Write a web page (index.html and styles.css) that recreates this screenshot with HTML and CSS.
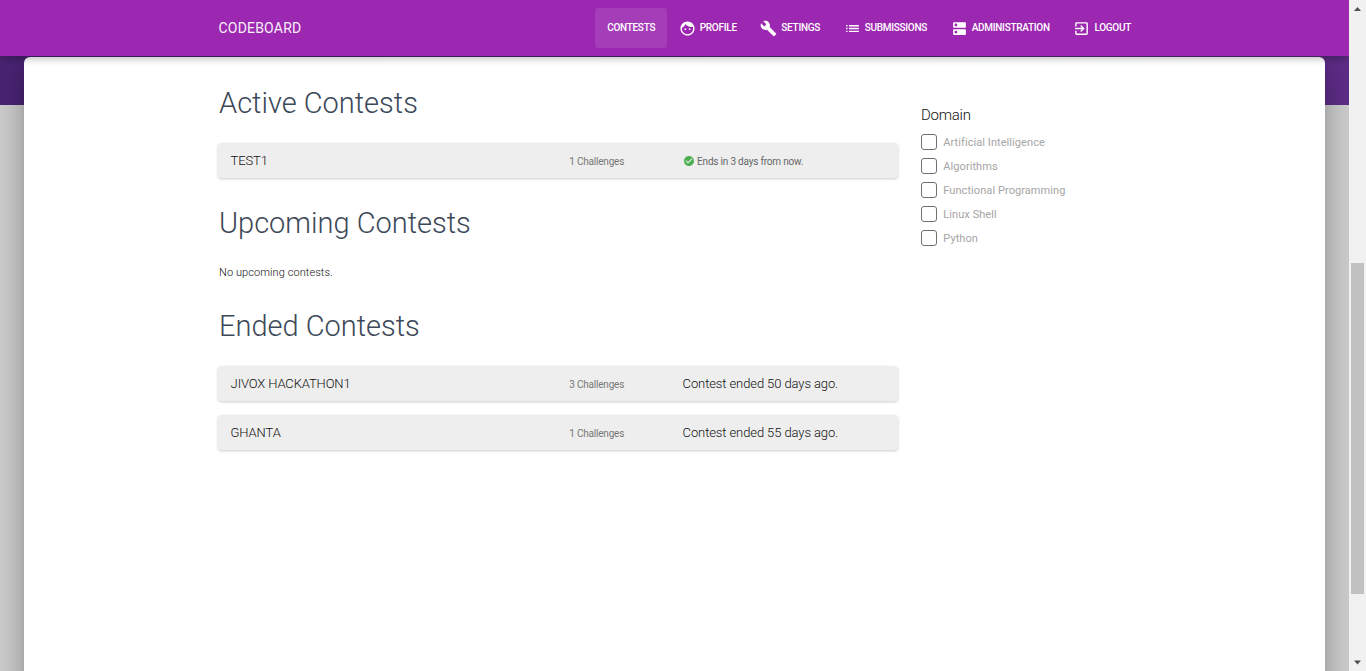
FILE: index.html
```
<!DOCTYPE html>
<html lang="en">
<head>
<meta charset="utf-8">
<title>Codeboard</title>
<link rel="stylesheet" href="styles.css">
</head>
<body>
<div class="window">
  <div class="page">
    <header class="navbar">
      <a class="brand">CODEBOARD</a>
      <nav class="nav">
        <a class="nav-link active"><span class="label">CONTESTS</span></a>
        <a class="nav-link"><svg class="icon" viewBox="0 0 24 24"><path d="M9 11.75c-.69 0-1.25.56-1.25 1.25s.56 1.25 1.25 1.25 1.25-.56 1.25-1.25-.56-1.25-1.25-1.25zm6 0c-.69 0-1.25.56-1.25 1.25s.56 1.25 1.25 1.25 1.25-.56 1.25-1.25-.56-1.25-1.25-1.25zM12 2C6.48 2 2 6.48 2 12s4.480 10 10 10 10-4.480 10-10S17.520 2 12 2zm0 18c-4.410 0-8-3.590-8-8 0-.29.020-.58.050-.86 2.360-1.050 4.230-2.980 5.210-5.370C11.070 8.330 14.050 10 17.420 10c.78 0 1.530-.09 2.250-.26.210.71.330 1.470.330 2.260 0 4.410-3.590 8-8 8z"/></svg><span class="label">PROFILE</span></a>
        <a class="nav-link"><svg class="icon" viewBox="0 0 24 24"><path d="M22.700 19l-9.100-9.100c.900-2.300.400-5-1.500-6.900-2-2-5-2.400-7.400-1.300L9 6 6 9 1.600 4.700C.400 7.100.900 10.100 2.900 12.100c1.900 1.900 4.600 2.400 6.900 1.500l9.100 9.100c.400.400 1 .400 1.400 0l2.300-2.300c.500-.400.500-1.100.100-1.400z"/></svg><span class="label">SETINGS</span></a>
        <a class="nav-link"><svg class="icon" viewBox="0 0 24 24"><path d="M3 13h2v-2H3v2zm0 4h2v-2H3v2zm0-8h2V7H3v2zm4 4h14v-2H7v2zm0 4h14v-2H7v2zM7 7v2h14V7H7z"/></svg><span class="label">SUBMISSIONS</span></a>
        <a class="nav-link"><svg class="icon" viewBox="0 0 24 24"><path d="M20 13H4c-.55 0-1 .45-1 1v6c0 .55.45 1 1 1h16c.55 0 1-.45 1-1v-6c0-.55-.45-1-1-1zM7 19c-1.100 0-2-.9-2-2s.9-2 2-2 2 .9 2 2-.9 2-2 2zM20 3H4c-.55 0-1 .45-1 1v6c0 .55.45 1 1 1h16c.55 0 1-.45 1-1V4c0-.55-.45-1-1-1zM7 9c-1.100 0-2-.9-2-2s.9-2 2-2 2 .9 2 2-.9 2-2 2z"/></svg><span class="label">ADMINISTRATION</span></a>
        <a class="nav-link"><svg class="icon" viewBox="0 0 24 24"><path d="M10.090 15.590L11.500 17l5-5-5-5-1.410 1.410L12.670 11H3v2h9.670l-2.580 2.590zM19 3H5c-1.110 0-2 .9-2 2v4h2V5h14v14H5v-4H3v4c0 1.100.89 2 2 2h14c1.100 0 2-.9 2-2V5c0-1.100-.9-2-2-2z"/></svg><span class="label">LOGOUT</span></a>
      </nav>
    </header>
    <main class="card">
      <div class="contests">
        <h2 class="title">Active Contests</h2>
        <div class="row">
          <span class="name">TEST1</span>
          <span class="count">1 Challenges</span>
          <span class="status"><svg class="check" viewBox="0 0 24 24"><path d="M12 2C6.480 2 2 6.480 2 12s4.480 10 10 10 10-4.480 10-10S17.520 2 12 2zm-2 15l-5-5 1.410-1.410L10 14.170l7.590-7.590L19 8l-9 9z"/></svg>Ends in 3 days from now.</span>
        </div>
        <h2 class="title">Upcoming Contests</h2>
        <p class="empty">No upcoming contests.</p>
        <h2 class="title">Ended Contests</h2>
        <div class="row">
          <span class="name">JIVOX HACKATHON1</span>
          <span class="count">3 Challenges</span>
          <span class="ended">Contest ended 50 days ago.</span>
        </div>
        <div class="row">
          <span class="name">GHANTA</span>
          <span class="count">1 Challenges</span>
          <span class="ended">Contest ended 55 days ago.</span>
        </div>
      </div>
      <aside class="filters">
        <h4 class="filter-title">Domain</h4>
        <label class="option"><span class="box"></span>Artificial Intelligence</label>
        <label class="option"><span class="box"></span>Algorithms</label>
        <label class="option"><span class="box"></span>Functional Programming</label>
        <label class="option"><span class="box"></span>Linux Shell</label>
        <label class="option"><span class="box"></span>Python</label>
      </aside>
    </main>
  </div>
  <div class="scrollbar">
    <svg class="arrow" viewBox="0 0 17 17"><path d="M5 11L8.500 7 12 11z"/></svg>
    <div class="track"><div class="thumb"></div></div>
    <svg class="arrow" viewBox="0 0 17 17"><path d="M5 6.500L8.500 10.500 12 6.500z"/></svg>
  </div>
</div>
</body>
</html>
```
FILE: styles.css
```
* { box-sizing: border-box; }
body {
  margin: 0;
  height: 671px;
  overflow: hidden;
  font-family: Roboto, "Liberation Sans", sans-serif;
  font-weight: 300;
  color: #111;
}
.window { display: flex; height: 671px; }
.page {
  width: 1349px;
  overflow: hidden;
  display: flex;
  flex-direction: column;
  background: linear-gradient(90deg, #4a2474, #5f2d88) 0 0 / 100% 105px no-repeat #ccc;
}
.navbar {
  position: relative;
  z-index: 1;
  flex: none;
  display: flex;
  align-items: center;
  justify-content: space-between;
  height: 56px;
  padding: 0 206.200px 0 218.500px;
  background: #9c27b0;
  color: #fff;
  box-shadow: 0 3px 7px rgba(0, 0, 0, 0.25);
}
.brand { font-size: 14px; font-weight: 400; line-height: 20px; letter-spacing: 0.200px; opacity: 0.93; }
.nav { display: flex; }
.nav-link {
  display: flex;
  align-items: center;
  gap: 4px;
  height: 40px;
  padding: 0 11.800px;
  border-radius: 3px;
  font-size: 10px;
  line-height: 16px;
  font-weight: 500;
  letter-spacing: -0.280px;
}
.nav-link.active { background: rgba(255, 255, 255, 0.1); }
.label { white-space: nowrap; }
.icon { width: 17px; height: 17px; fill: #fff; }
.card {
  flex: none;
  display: flex;
  gap: 23px;
  height: 700px;
  margin: 1px 24px 0;
  padding: 21px 0 0 194px;
  background: #fff;
  border-radius: 6px;
  box-shadow: 0 16px 24px 2px rgba(0, 0, 0, 0.14), 0 6px 30px 5px rgba(0, 0, 0, 0.12), 0 8px 10px -5px rgba(0, 0, 0, 0.2);
}
.contests { width: 680px; }
.title {
  margin: 0 0 15px 1px;
  font-size: 29px;
  line-height: 50px;
  font-weight: 300;
  color: #3c4858;
}
.row {
  display: flex;
  align-items: center;
  height: 35px;
  margin-bottom: 14px;
  padding-left: 12.600px;
  background: #eee;
  border-radius: 4px;
  box-shadow: 0 1px 3px rgba(0, 0, 0, 0.2);
}
.row + .title { margin-top: 20px; }
.name { width: 338.600px; font-size: 13px; letter-spacing: -0.120px; }
.count { width: 113.400px; font-size: 10px; font-weight: 400; letter-spacing: -0.200px; color: #777; padding-top: 2px; }
.status {
  display: flex;
  align-items: center;
  gap: 2.500px;
  font-size: 10px;
  font-weight: 400;
  letter-spacing: -0.200px;
  color: #666;
  padding-top: 2px;
}
.check { width: 12px; height: 12px; margin-top: -2px; fill: #4caf50; }
.ended { font-size: 13px; letter-spacing: -0.100px; }
.empty { margin: 0 0 19px 1px; padding-top: 1px; font-size: 11px; line-height: 18px; letter-spacing: 0.080px; }
.filters { padding-top: 27px; }
.filter-title { margin: 0 0 5px; font-size: 15px; line-height: 20px; font-weight: 300; letter-spacing: -0.250px; }
.option {
  display: flex;
  align-items: center;
  gap: 6.300px;
  height: 24px;
  font-size: 11px;
  font-weight: 400;
  letter-spacing: 0.070px;
  color: #a5a5a5;
}
.box { width: 16px; height: 16px; border: 1px solid #707070; border-radius: 3px; }
.scrollbar { width: 17px; display: flex; flex-direction: column; background: #f1f1f1; }
.arrow { width: 17px; height: 17px; fill: #505050; }
.track { flex: 1; padding: 246px 2px 0; }
.thumb { width: 13px; height: 331px; background: #c1c1c1; }
```
